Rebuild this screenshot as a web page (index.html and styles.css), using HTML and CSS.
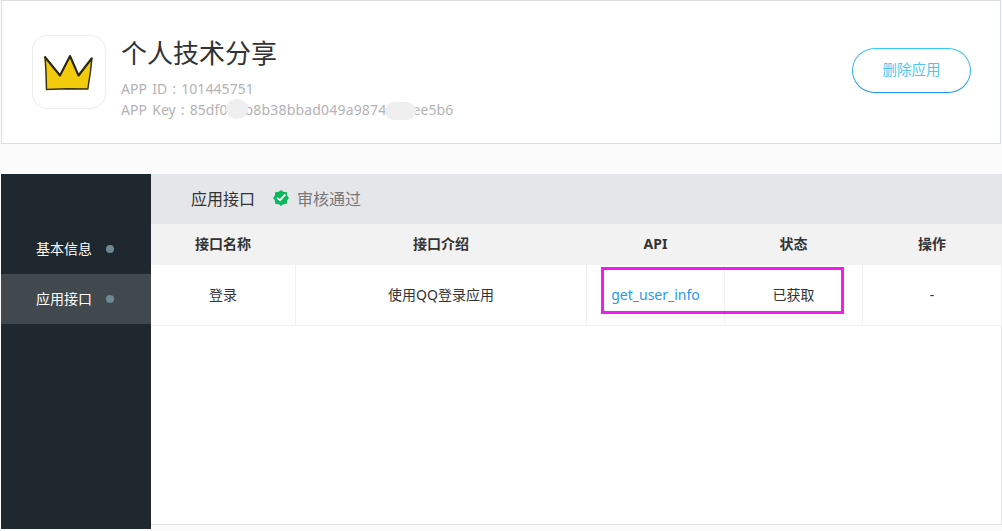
FILE: index.html
```html
<!DOCTYPE html>
<html lang="zh-CN">
<head>
    <meta charset="UTF-8">
    <meta name="viewport" content="width=device-width, initial-scale=1.0">
    <title>应用接口</title>
    <link rel="stylesheet" href="styles.css">
</head>
<body>

    <div class="app-card">
        <div class="app-logo">
            <svg width="52" height="40" viewBox="0 0 52 40">
                <path d="M2 4.500 L17 23.500 L27 4 L35.500 23.500 L49 6 L46.500 20 L44.500 37 L3.500 37.500 L2.500 20 Z" fill="#f2cc0c"/>
                <path d="M1.500 4.500 L17 23.500 L27 4 L35.500 23.500 L49 6" fill="none" stroke="#2a2510" stroke-width="2.100" stroke-linejoin="round"/>
                <path d="M49 5.500 L47.500 19 L44.800 37 L24 36.800 L3.500 37.500 L3 20 L2 4.500" fill="none" stroke="#3b320e" stroke-width="1.500"/>
            </svg>
        </div>
        <div class="app-info">
            <h1 class="app-name">个人技术分享</h1>
            <p class="app-id">APP ID : 101445751</p>
            <p class="app-key">APP Key : 85df0<span class="smudge smudge-a"></span><span class="after-a">b8b38bbad049a9874</span><span class="smudge smudge-b"></span><span class="after-b">ee5b6</span></p>
        </div>
        <button class="delete-btn"><span>删除应用</span></button>
    </div>

    <div class="main">
        <ul class="sidebar">
            <li class="menu-item"><span>基本信息</span><i class="dot"></i></li>
            <li class="menu-item active"><span>应用接口</span><i class="dot"></i></li>
        </ul>

        <div class="content">
            <div class="content-title">
                <span>应用接口</span>
                <svg class="check" width="16" height="16" viewBox="0 0 16 16">
                    <path d="M8 0 L10.200 1.800 L13.800 2.200 L14.200 5.800 L16 8 L14.200 10.200 L13.800 13.800 L10.200 14.200 L8 16 L5.800 14.200 L2.200 13.800 L1.800 10.200 L0 8 L1.800 5.800 L2.200 2.200 L5.800 1.800 Z" fill="#09b85a"/>
                    <path d="M4.200 7.800 L7 10.300 L12.300 4.300" fill="none" stroke="#fff" stroke-width="1.800"/>
                </svg>
                <span class="status">审核通过</span>
            </div>

            <div class="api-table">
                <div class="row head">
                    <div class="cell">接口名称</div>
                    <div class="cell">接口介绍</div>
                    <div class="cell">API</div>
                    <div class="cell">状态</div>
                    <div class="cell">操作</div>
                </div>
                <div class="row">
                    <div class="cell">登录</div>
                    <div class="cell">使用QQ登录应用</div>
                    <div class="cell"><a class="api-link">get_user_info</a></div>
                    <div class="cell">已获取</div>
                    <div class="cell">-</div>
                    <div class="highlight"></div>
                </div>
            </div>
        </div>
    </div>

</body>
</html>
```
FILE: styles.css
```css
* {
    box-sizing: border-box;
    margin: 0;
    padding: 0;
}
body {
    height: 531px;
    overflow: hidden;
    padding-left: 1px;
    background: #fbfbfb;
    color: #333;
    font-family: "Noto Sans", "Noto Sans CJK SC", sans-serif;
    font-size: 14px;
}

/* app card */
.app-card {
    display: flex;
    align-items: flex-start;
    width: 1000px;
    height: 144px;
    padding: 34px 29px 0 30px;
    background: #fff;
    border: 1px solid #dcdee1;
}
.app-logo {
    display: flex;
    align-items: center;
    justify-content: center;
    width: 74px;
    height: 74px;
    border: 1px solid #ececec;
    border-radius: 15px;
}
.app-info {
    flex: 1;
    margin-left: 15px;
    color: #b3b3b3;
}
.app-name {
    height: 43px;
    line-height: 37px;
    font-size: 26px;
    font-weight: 400;
    color: #333;
}
.app-id,
.app-key {
    height: 21px;
    line-height: 21px;
    white-space: nowrap;
    word-spacing: 1.3px;
    letter-spacing: 0.08px;
}
.app-key {
    display: flex;
}
.smudge {
    position: relative;
    background: #efefef;
    border-radius: 50%;
}
.smudge-a {
    width: 22px;
    height: 20px;
    margin: 0 -3px 0 -2px;
}
.after-a {
    letter-spacing: 0.18px;
}
.smudge-b {
    width: 31px;
    height: 18px;
    margin: 3px -4px 0 -1px;
    border-radius: 12px;
}
.delete-btn {
    width: 119px;
    height: 45px;
    margin-top: 13px;
    padding-bottom: 4px;
    border: 1px solid transparent;
    border-radius: 23px;
    background: linear-gradient(#fff, #fff) padding-box, linear-gradient(#35cdf3, #1c98f0) border-box;
    color: #4cc8ee;
    font: inherit;
    font-size: 14.5px;
}

/* main */
.main {
    display: flex;
    width: 1001px;
    height: 355px;
    margin-top: 30px;
}
.sidebar {
    width: 150px;
    padding-top: 50px;
    background: #20282f;
    list-style: none;
}
.menu-item {
    display: flex;
    align-items: center;
    height: 50px;
    padding-left: 35px;
    color: #fff;
}
.menu-item span {
    padding-bottom: 2px;
}
.menu-item.active {
    background: #42494e;
}
.dot {
    width: 8px;
    height: 8px;
    margin-left: 14px;
    border-radius: 50%;
    background: #6f8992;
}
.content {
    width: 851px;
    height: 351px;
    background: #fff;
    border-bottom: 1px solid #e4e4e6;
    border-right: 1px solid #e4e4e6;
}
.content-title {
    display: flex;
    align-items: center;
    height: 50px;
    padding-left: 40px;
    background: #e5e6ea;
    font-size: 16px;
}
.content-title span {
    padding-bottom: 2px;
}
.check {
    margin: -2px 8px 0 18px;
}
.status {
    color: #777;
}

/* table */
.api-table {
    width: 851px;
}
.row {
    position: relative;
    display: grid;
    grid-template-columns: 145px 291px 138px 138px 139px;
    height: 61px;
    border-bottom: 1px solid #f1f1f1;
}
.cell {
    display: flex;
    align-items: center;
    justify-content: center;
    padding-bottom: 2px;
    border-right: 1px solid #f1f1f1;
}
.row.head {
    height: 41px;
    background: #f2f2f2;
    border-bottom: 0;
    font-weight: 700;
}
.row.head .cell {
    padding-bottom: 3px;
}
.api-link {
    color: #2897e8;
}
.highlight {
    position: absolute;
    top: 2px;
    left: 450px;
    width: 243px;
    height: 47px;
    border: 3px solid #f21bf0;
}
```
